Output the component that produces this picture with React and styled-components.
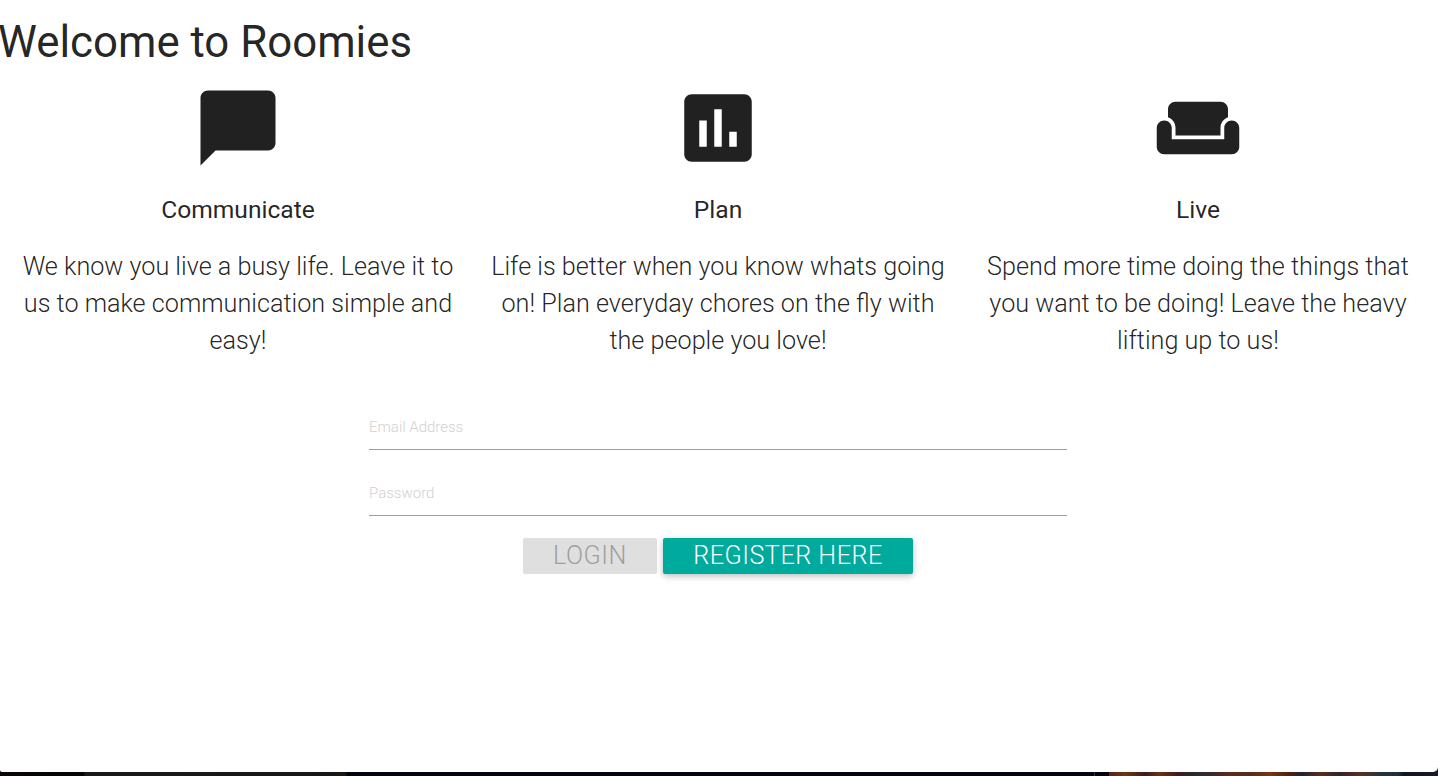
import React from "react";
import styled, { createGlobalStyle } from "styled-components";

const GlobalStyle = createGlobalStyle`
  *, *::before, *::after { box-sizing: border-box; }
  html { font-size: 15px; }
  body {
    margin: 0;
    font-family: Roboto, "Liberation Sans", sans-serif;
    line-height: 1.5;
    color: rgba(0, 0, 0, 0.87);
    overflow: hidden;
  }
`;

const Desktop = styled.div`
  height: 776px;
  overflow: hidden;
  background:
    linear-gradient(90deg,
      #0b0507 0, #040305 84px, #19191b 85px, #171518 346px,
      #02040c 347px, #02040c 1094px, #34363d 1094px, #34363d 1095px,
      #02040c 1095px, #02040c 1109px, #552413 1109px, #703315 1125px,
      #35211d 1145px, #6b3015 1160px, #3a201a 1178px, #292833 1195px,
      #392a2c 1212px, #5a2b1c 1230px, #542b20 1250px, #7b3414 1270px,
      #51220f 1288px, #202330 1302px, #5a2d1b 1320px, #32242a 1340px,
      #583023 1360px, #27313f 1382px, #202e40 1398px, #101520 1404px,
      #161b27 1438px) bottom / 100% 8px no-repeat,
    #02040c;
`;

const Page = styled.main`
  height: 772px;
  padding-top: 18px;
  background: #fff;
  border-radius: 0 0 5px 2px;
`;

const Title = styled.h3`
  margin: 0 0 0 -2px;
  font-size: 2.92rem;
  line-height: 48px;
  font-weight: 400;
`;

const Features = styled.section`
  display: grid;
  grid-template-columns: repeat(3, 480px);
  margin: 17px 0 0 -2px;
`;

const Feature = styled.article`
  display: flex;
  flex-direction: column;
  align-items: center;
  padding: 0 11.25px;
  text-align: center;
`;

const FeatureIcon = styled.svg`
  width: 90px;
  height: 90px;
  fill: #212121;
`;

const FeatureTitle = styled.h5`
  margin: 23px 0 25px;
  font-size: 1.64rem;
  line-height: 27px;
  font-weight: 400;
`;

const FeatureText = styled.p`
  margin: 0;
  font-size: 1.68rem;
  line-height: 37px;
  font-weight: 300;
`;

const Form = styled.form`
  width: 698px;
  margin: 46px 0 0 369px;
`;

const Field = styled.input`
  display: block;
  width: 100%;
  height: 45px;
  margin: 0 0 21px;
  padding: 0;
  border: 0;
  border-bottom: 1px solid #9e9e9e;
  border-radius: 0;
  outline: none;
  background: transparent;
  font-family: inherit;
  font-size: 1rem;
  font-weight: 300;

  &::placeholder { color: #d1d1d1; opacity: 1; }
`;

const Actions = styled.div`
  display: flex;
  justify-content: center;
  gap: 6px;
  margin-top: 22px;
`;

const Button = styled.button`
  width: ${(p) => p.$width};
  height: 36px;
  padding: 0;
  border: 0;
  border-radius: 2px;
  background: ${(p) => (p.$primary ? "#00aa9d" : "#dfdfdf")};
  color: ${(p) => (p.$primary ? "#fff" : "#9f9f9f")};
  box-shadow: ${(p) =>
    p.$primary
      ? "0 2px 5px 0 rgba(0,0,0,.16), 0 2px 10px 0 rgba(0,0,0,.12)"
      : "none"};
  font-family: inherit;
  font-size: 1.68rem;
  font-weight: 300;
  line-height: 36px;
  letter-spacing: 0.5px;
  text-transform: uppercase;
  white-space: nowrap;
`;

const features = [
  {
    title: "Communicate",
    text: "We know you live a busy life. Leave it to us to make communication simple and easy!",
    path: "M20 2H4c-1.1 0-2 .9-2 2v18l4-4h14c1.1 0 2-.9 2-2V4c0-1.1-.9-2-2-2z",
  },
  {
    title: "Plan",
    text: "Life is better when you know whats going on! Plan everyday chores on the fly with the people you love!",
    path: "M19 3H5c-1.1 0-2 .9-2 2v14c0 1.1.9 2 2 2h14c1.1 0 2-.9 2-2V5c0-1.1-.9-2-2-2zM9 17H7v-7h2v7zm4 0h-2V7h2v10zm4 0h-2v-4h2v4z",
  },
  {
    title: "Live",
    text: "Spend more time doing the things that you want to be doing! Leave the heavy lifting up to us!",
    path: "M21 10c-1.1 0-2 .9-2 2v3H5v-3c0-1.1-.9-2-2-2s-2 .9-2 2v5c0 1.1.9 2 2 2h18c1.1 0 2-.9 2-2v-5c0-1.1-.9-2-2-2zm-3-5H6c-1.1 0-2 .9-2 2v2.15c1.16.41 2 1.51 2 2.82V14h12v-2.03c0-1.3.84-2.4 2-2.82V7c0-1.1-.9-2-2-2z",
  },
];

export default function App() {
  return (
    <Desktop>
      <GlobalStyle />
      <Page>
        <Title>Welcome to Roomies</Title>
        <Features>
          {features.map((f) => (
            <Feature key={f.title}>
              <FeatureIcon viewBox="0 0 24 24" aria-hidden="true">
                <path d={f.path} />
              </FeatureIcon>
              <FeatureTitle>{f.title}</FeatureTitle>
              <FeatureText>{f.text}</FeatureText>
            </Feature>
          ))}
        </Features>
        <Form>
          <Field type="email" placeholder="Email Address" />
          <Field type="password" placeholder="Password" />
          <Actions>
            <Button type="button" $width="134px" disabled>Login</Button>
            <Button type="button" $width="250px" $primary>Register Here</Button>
          </Actions>
        </Form>
      </Page>
    </Desktop>
  );
}
